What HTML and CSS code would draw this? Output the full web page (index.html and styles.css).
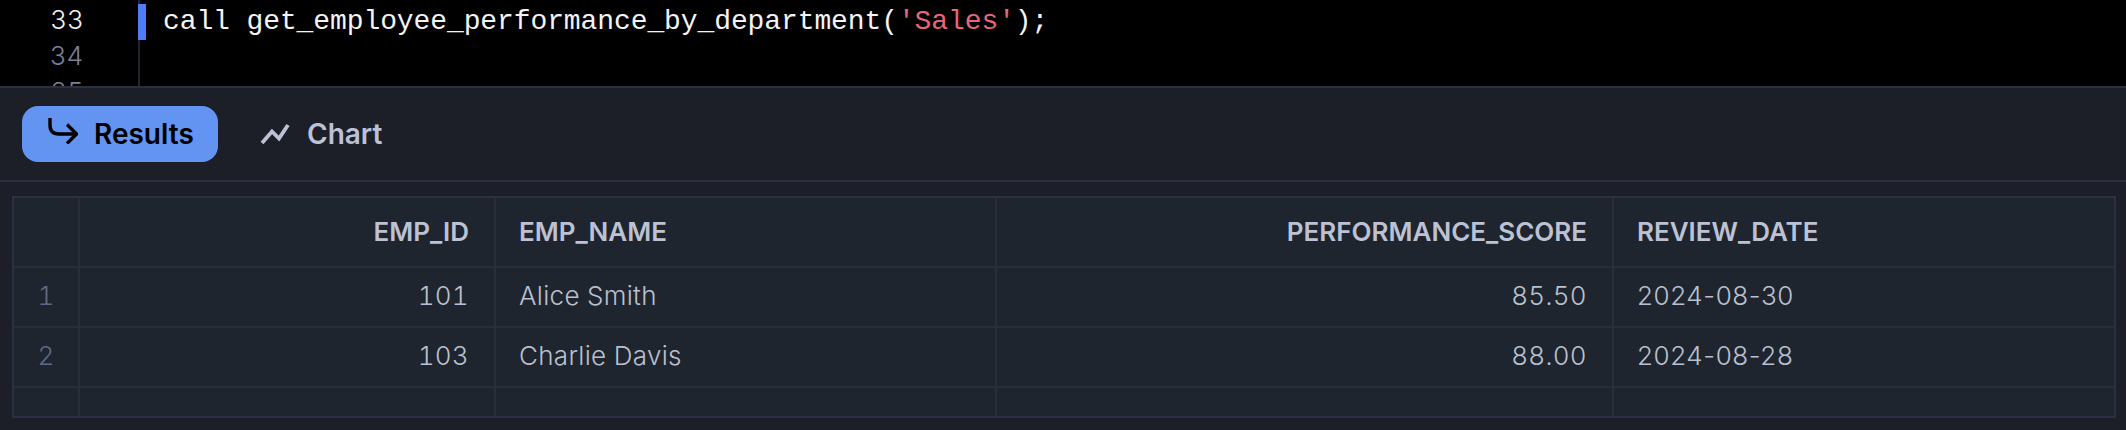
FILE: index.html
```html
<!DOCTYPE html>
<html lang="en">
<head>
<meta charset="utf-8">
<title>Results</title>
<link rel="stylesheet" href="styles.css">
</head>
<body>
<section class="editor">
  <div class="gutter">
    <div class="ln ln-active">33</div>
    <div class="ln">34</div>
    <div class="ln">35</div>
  </div>
  <div class="code">
    <div class="code-line code-line-active">call get_employee_performance_by_department(<span class="str">'Sales'</span>);</div>
  </div>
</section>
<nav class="tabs">
  <button class="tab tab-active">
    <svg class="tab-icon tab-icon-results" viewBox="0 0 30 26" fill="none" stroke="currentColor" stroke-width="3.4"><path d="M2 0v7q0 9 9 9h17"/><path d="M19 6.500 28.500 16 19 25.500"/></svg>
    <span>Results</span>
  </button>
  <button class="tab tab-plain">
    <svg class="tab-icon tab-icon-chart" viewBox="0 0 30 22" fill="none" stroke="currentColor" stroke-width="3.8"><path d="M2 20 12 8.500l7 7L28 2"/></svg>
    <span>Chart</span>
  </button>
</nav>
<main class="results">
  <div class="grid">
    <div class="row row-head">
      <div class="cell"></div>
      <div class="cell num">EMP_ID</div>
      <div class="cell">EMP_NAME</div>
      <div class="cell num">PERFORMANCE_SCORE</div>
      <div class="cell">REVIEW_DATE</div>
    </div>
    <div class="row row-body">
      <div class="cell idx">1</div>
      <div class="cell num">101</div>
      <div class="cell">Alice Smith</div>
      <div class="cell num">85.50</div>
      <div class="cell date">2024-08-30</div>
    </div>
    <div class="row row-body">
      <div class="cell idx">2</div>
      <div class="cell num">103</div>
      <div class="cell">Charlie Davis</div>
      <div class="cell num">88.00</div>
      <div class="cell date">2024-08-28</div>
    </div>
    <div class="row row-empty">
      <div class="cell"></div>
      <div class="cell"></div>
      <div class="cell"></div>
      <div class="cell"></div>
      <div class="cell"></div>
    </div>
  </div>
</main>
</body>
</html>
```
FILE: styles.css
```css
* { box-sizing: border-box; }
html, body { margin: 0; height: 430px; overflow: hidden; }
body { background: #1c1f27; font-family: Inter, "Liberation Sans", sans-serif; }

.editor { display: flex; height: 86px; background: #000; overflow: hidden; }
.gutter { width: 138px; flex: none; padding: 2px 54px 0 0; text-align: right; font: 300 26px/36px Inter, "Liberation Sans", sans-serif; letter-spacing: 1px; color: #7a8196; }
.ln { height: 36px; }
.ln-active { color: #f2f2f2; }
.code { flex: 1; border-left: 2px solid #23262f; }
.code-line { height: 36px; margin-top: 4px; margin-left: -2px; padding-left: 17px; border-left: 8px solid #4f7cf7; font: 28px/36px "Liberation Mono", monospace; letter-spacing: -0.1px; color: #f4f4f4; white-space: pre; }
.str { color: #e8667c; }

.tabs { display: flex; align-items: center; gap: 10px; height: 96px; padding: 16px 22px; border-top: 2px solid #2b3040; border-bottom: 2px solid #2b2f3f; }
.tab { display: flex; align-items: center; height: 56px; width: 196px; padding: 0; border: 0; border-radius: 16px; background: transparent; color: #bcc2d4; font: 600 28px/1 Inter, "Liberation Sans", sans-serif; }
.tab-active { background: #6394f2; color: #000; padding-left: 26px; gap: 16px; }
.tab-plain { padding-left: 32px; gap: 17px; }
.tab-icon { flex: none; }
.tab-icon-results { width: 30px; height: 26px; margin-bottom: 6px; }
.tab-icon-chart { width: 30px; height: 22px; }

.results { padding: 14px 10px 12px 12px; }
.grid { border: 2px solid #2c3044; background: #1f252e; height: 222px; }
.row { display: grid; grid-template-columns: 66px 416px 501px 617px 1fr; border-bottom: 2px solid #2b2e38; }
.row:last-child { border-bottom: 0; }
.row-head { height: 70px; color: #bcc2d4; font: 600 26px/68px Inter, "Liberation Sans", sans-serif; }
.row-body { height: 60px; color: #bac0cf; font: 300 26px/56px Inter, "Liberation Sans", sans-serif; font-variant-numeric: tabular-nums; letter-spacing: 0.3px; }
.row-empty { height: 28px; }
.cell { padding: 0 23px; border-right: 2px solid #2b2e38; white-space: nowrap; }
.cell:last-child { border-right: 0; }
.num { text-align: right; padding-right: 25px; }
.date { font-variant-numeric: normal; letter-spacing: 0.6px; }
.idx { padding: 0; text-align: center; color: #606a88; }
```
